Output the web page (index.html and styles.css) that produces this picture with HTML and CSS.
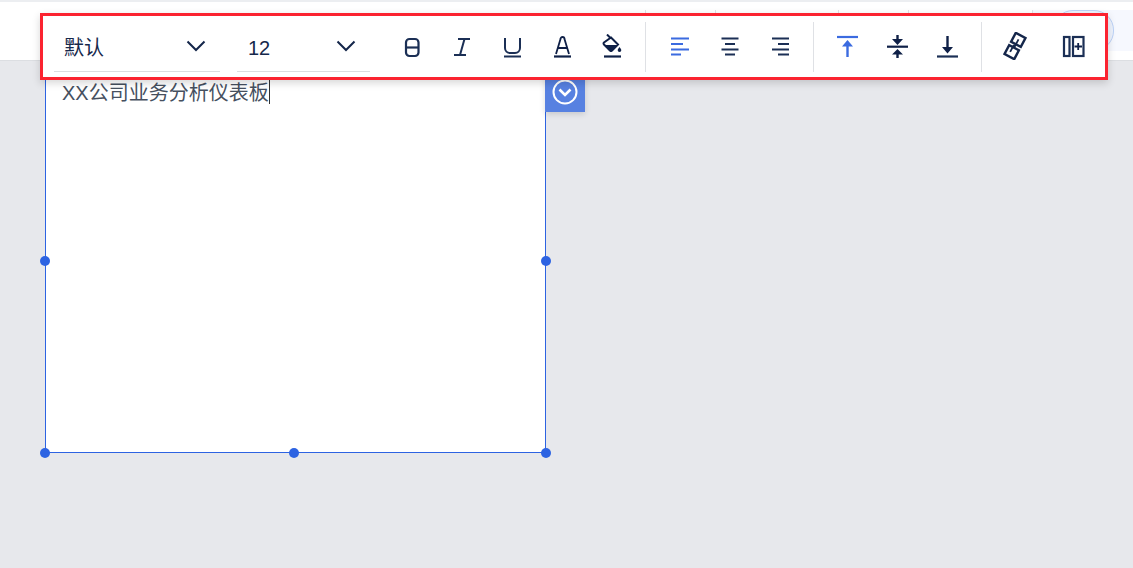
FILE: index.html
```html
<!DOCTYPE html>
<html lang="zh">
<head>
<meta charset="utf-8">
<title>XX公司业务分析仪表板</title>
<link rel="stylesheet" href="styles.css">
</head>
<body>
<div class="app">
  <header class="topbar">
    <div class="tabs">
      <span class="tab tab-a"></span><span class="tab tab-b"></span><span class="tab tab-c"></span><span class="tab tab-d"></span>
      <span class="tab pill-area"><span class="pill"></span></span>
    </div>
  </header>
  <main class="canvas">
    <div class="widget">
      <div class="editor"><span class="editor-text">XX公司业务分析仪表板</span><span class="caret"></span></div>
      <button class="collapse" type="button" aria-label="折叠">
        <svg width="28" height="28" viewBox="0 0 28 28" fill="none" stroke="#fff"><circle cx="14" cy="14" r="11.500" stroke-width="2"/><path d="M8.500 11.500l5.500 5.500 5.500-5.500" stroke-width="2.600"/></svg>
      </button>
      <span class="handle h-ml"></span><span class="handle h-mr"></span><span class="handle h-bl"></span><span class="handle h-bm"></span><span class="handle h-br"></span>
    </div>
  </main>
  <div class="toolbar">
    <div class="select select-font"><span class="select-label">默认</span>
      <svg class="chev" width="20" height="12" viewBox="0 0 20 12" fill="none" stroke="#14264a" stroke-width="2"><path d="M1.500 1.500l8.500 8.500 8.500-8.500"/></svg></div>
    <div class="select select-size"><span class="select-label">12</span>
      <svg class="chev" width="20" height="12" viewBox="0 0 20 12" fill="none" stroke="#14264a" stroke-width="2"><path d="M1.500 1.500l8.500 8.500 8.500-8.500"/></svg></div>
    <div class="group group-text">
      <span class="ico"><svg width="24" height="24" viewBox="0 0 24 24" fill="none" stroke="#1b2f55" stroke-width="2.200"><rect x="6" y="5" width="12.500" height="17" rx="3.500"/><path d="M6 13.500h12.500"/></svg></span>
      <span class="ico"><svg width="24" height="24" viewBox="0 0 24 24" fill="none" stroke="#1b2f55" stroke-width="2"><path d="M8 5h12M4 21h12M14.500 5l-4.500 16"/></svg></span>
      <span class="ico"><svg width="24" height="24" viewBox="0 0 24 24" fill="none" stroke="#1b2f55" stroke-width="2"><path d="M5 4v10a5 5 0 0 0 5 5h5a5 5 0 0 0 5-5v-10"/><path d="M4 22.500h17"/></svg></span>
      <span class="ico"><svg width="24" height="24" viewBox="0 0 24 24" fill="none" stroke="#0f2047" stroke-width="1.800"><path d="M6 20L10.500 5a2 2 0 0 1 4 0L19 20M7.500 14h10"/><path d="M4 22.500h17" stroke-width="2.200"/></svg></span>
      <span class="ico"><svg width="24" height="24" viewBox="0 0 24 24" fill="none"><path d="M7 0.500l4 4M11 3.500l7 7-6 6a1.500 1.500 0 0 1-2 0l-6-6a1.500 1.500 0 0 1 0-2z" stroke="#0f2047" stroke-width="2"/><path d="M4 11h14l-6 6.500a1.500 1.500 0 0 1-2 0z" fill="#0f2047"/><path d="M19.500 13c1 1.500 1.800 2.300 1.800 3.300a1.800 1.800 0 0 1-3.600 0c0-1 .8-1.800 1.800-3.300z" fill="#0f2047"/><path d="M4 22.500h17" stroke="#0f2047" stroke-width="2.200"/></svg></span>
    </div>
    <span class="sep sep-a"></span>
    <div class="group group-align">
      <span class="ico"><svg width="24" height="24" viewBox="0 0 24 24" fill="none" stroke="#3b6be0" stroke-width="1.800"><path d="M3 4.500h18M3 10h12M3 15.500h18M3 20.500h10"/></svg></span>
      <span class="ico"><svg width="24" height="24" viewBox="0 0 24 24" fill="none" stroke="#1b2f55" stroke-width="1.800"><path d="M3.500 4.500h17M7 10h10M3.500 15.500h17M7 20.500h10"/></svg></span>
      <span class="ico"><svg width="24" height="24" viewBox="0 0 24 24" fill="none" stroke="#1b2f55" stroke-width="1.800"><path d="M4 4.500h17M10 10h11M4 15.500h17M10 20.500h11"/></svg></span>
    </div>
    <span class="sep sep-b"></span>
    <div class="group group-valign">
      <span class="ico"><svg width="24" height="24" viewBox="0 0 24 24" fill="none"><path d="M1 3h21" stroke="#3b6be0" stroke-width="2.200"/><path d="M11.500 11v12" stroke="#3b6be0" stroke-width="2.400"/><path d="M11.500 6l5.500 6.500H6z" fill="#3b6be0"/></svg></span>
      <span class="ico"><svg width="24" height="24" viewBox="0 0 24 24" fill="none"><path d="M1 12.700h21" stroke="#0f2047" stroke-width="2.200"/><path d="M11.500 1v5M11.500 19v5" stroke="#0f2047" stroke-width="2.400"/><path d="M11.500 11L6 5h11zM11.500 15l5.500 5.500H6z" fill="#0f2047"/></svg></span>
      <span class="ico"><svg width="24" height="24" viewBox="0 0 24 24" fill="none"><path d="M1 22.500h21" stroke="#1b2f55" stroke-width="2.200"/><path d="M11.500 2v12" stroke="#0f2047" stroke-width="2.400"/><path d="M11.500 19.500L6 13h11z" fill="#0f2047"/></svg></span>
    </div>
    <span class="sep sep-c"></span>
    <div class="group group-misc">
      <span class="ico"><svg width="24" height="28" viewBox="0 0 24 28" fill="none" stroke="#14264a" stroke-width="2.400"><g transform="rotate(28 12 14)"><rect x="6.500" y="2" width="11" height="10"/><rect x="6.500" y="16" width="11" height="10"/><path d="M12 6.500v8l-1.500 0v7" stroke-width="1.800"/></g></svg></span>
      <span class="ico"><svg width="24" height="24" viewBox="0 0 24 24" fill="none" stroke="#1b2f55" stroke-width="2.200"><rect x="3" y="3" width="5.500" height="19"/><rect x="12" y="3" width="10.500" height="19"/><path d="M13.500 12.500h7.500M17.200 9v7" stroke-width="1.800" stroke="#0f2047"/></svg></span>
    </div>
  </div>
</div>
</body>
</html>
```

FILE: styles.css
```css
* { box-sizing: border-box; }
html, body { margin: 0; height: 100%; }
body { font-family: "Liberation Sans", "Noto Sans CJK SC", sans-serif; overflow: hidden; background: #e7e8ec; }
.app { position: relative; width: 1133px; height: 568px; display: flex; flex-direction: column; }
.topbar { height: 61px; flex: none; background: #fff; border-top: 2px solid #eceef1; border-bottom: 1px solid #dcdee2; padding-top: 8px; }
.tabs { display: flex; height: 41px; }
.tab { height: 41px; border-left: 1px solid #dfe1e5; flex: none; }
.tab-a { margin-left: 645px; width: 70px; }
.tab-b { width: 123px; }
.tab-c { width: 70px; }
.tab-d { width: 124px; }
.pill-area { width: 101px; background: #f6f8fe; padding-left: 20px; }
.pill { display: block; width: 61px; height: 41px; border: 1px solid #bcd2f7; border-radius: 20px; background: #eef3fd; }
.canvas { flex: 1; position: relative; }
.widget { position: absolute; left: 45px; top: 6px; width: 501px; height: 386px; }
.editor { width: 100%; height: 100%; background: #fff; border: 1px solid #2d63e2; padding: 12px 0 0 16px; line-height: 26px; font-size: 20px; color: #46505f; display: flex; align-items: flex-start; }
.caret { width: 1px; height: 24px; background: #333; }
.collapse { position: absolute; left: 500px; top: 0; width: 40px; height: 45px; padding: 11px 0 0; border: 0; background: #5781e1; box-shadow: 0 2px 6px rgba(0,0,0,.14); display: flex; justify-content: center; }
.handle { position: absolute; width: 10px; height: 10px; border-radius: 50%; background: #2d63e2; }
.h-ml { left: -5px; top: 189px; }
.h-mr { left: 496px; top: 189px; }
.h-bl { left: -5px; top: 381px; }
.h-bm { left: 244px; top: 381px; }
.h-br { left: 496px; top: 381px; }
.toolbar { position: absolute; left: 40px; top: 13px; width: 1068px; height: 67px; background: #fff; border: 3px solid #fb2330; box-shadow: 0 3px 8px rgba(0,0,0,.16); display: flex; align-items: flex-start; padding-left: 11px; }
.select { height: 56px; flex: none; border-bottom: 1px solid #dcdde0; display: flex; align-items: center; justify-content: space-between; padding: 0 14px 0 10px; color: #16284b; font-size: 20px; }
.select-label { line-height: 56px; padding-top: 8px; }
.chev { margin-top: 5px; }
.select-font { width: 166px; }
.select-size { width: 133px; margin-left: 17px; padding-left: 11px; }
.group { display: flex; height: 50px; align-items: center; margin-top: 5px; gap: 26px; flex: none; }
.ico { width: 24px; height: 24px; display: flex; align-items: center; justify-content: center; flex: none; }
.group-text { margin-left: 30px; }
.sep { width: 1px; height: 50px; margin-top: 6px; background: #dfe1e5; flex: none; }
.sep-a { margin-left: 21px; }
.group-align { margin-left: 22px; }
.sep-b { margin-left: 21px; }
.group-valign { margin-left: 22px; }
.sep-c { margin-left: 21px; }
.group-misc { margin-left: 21px; gap: 34px; }
```
